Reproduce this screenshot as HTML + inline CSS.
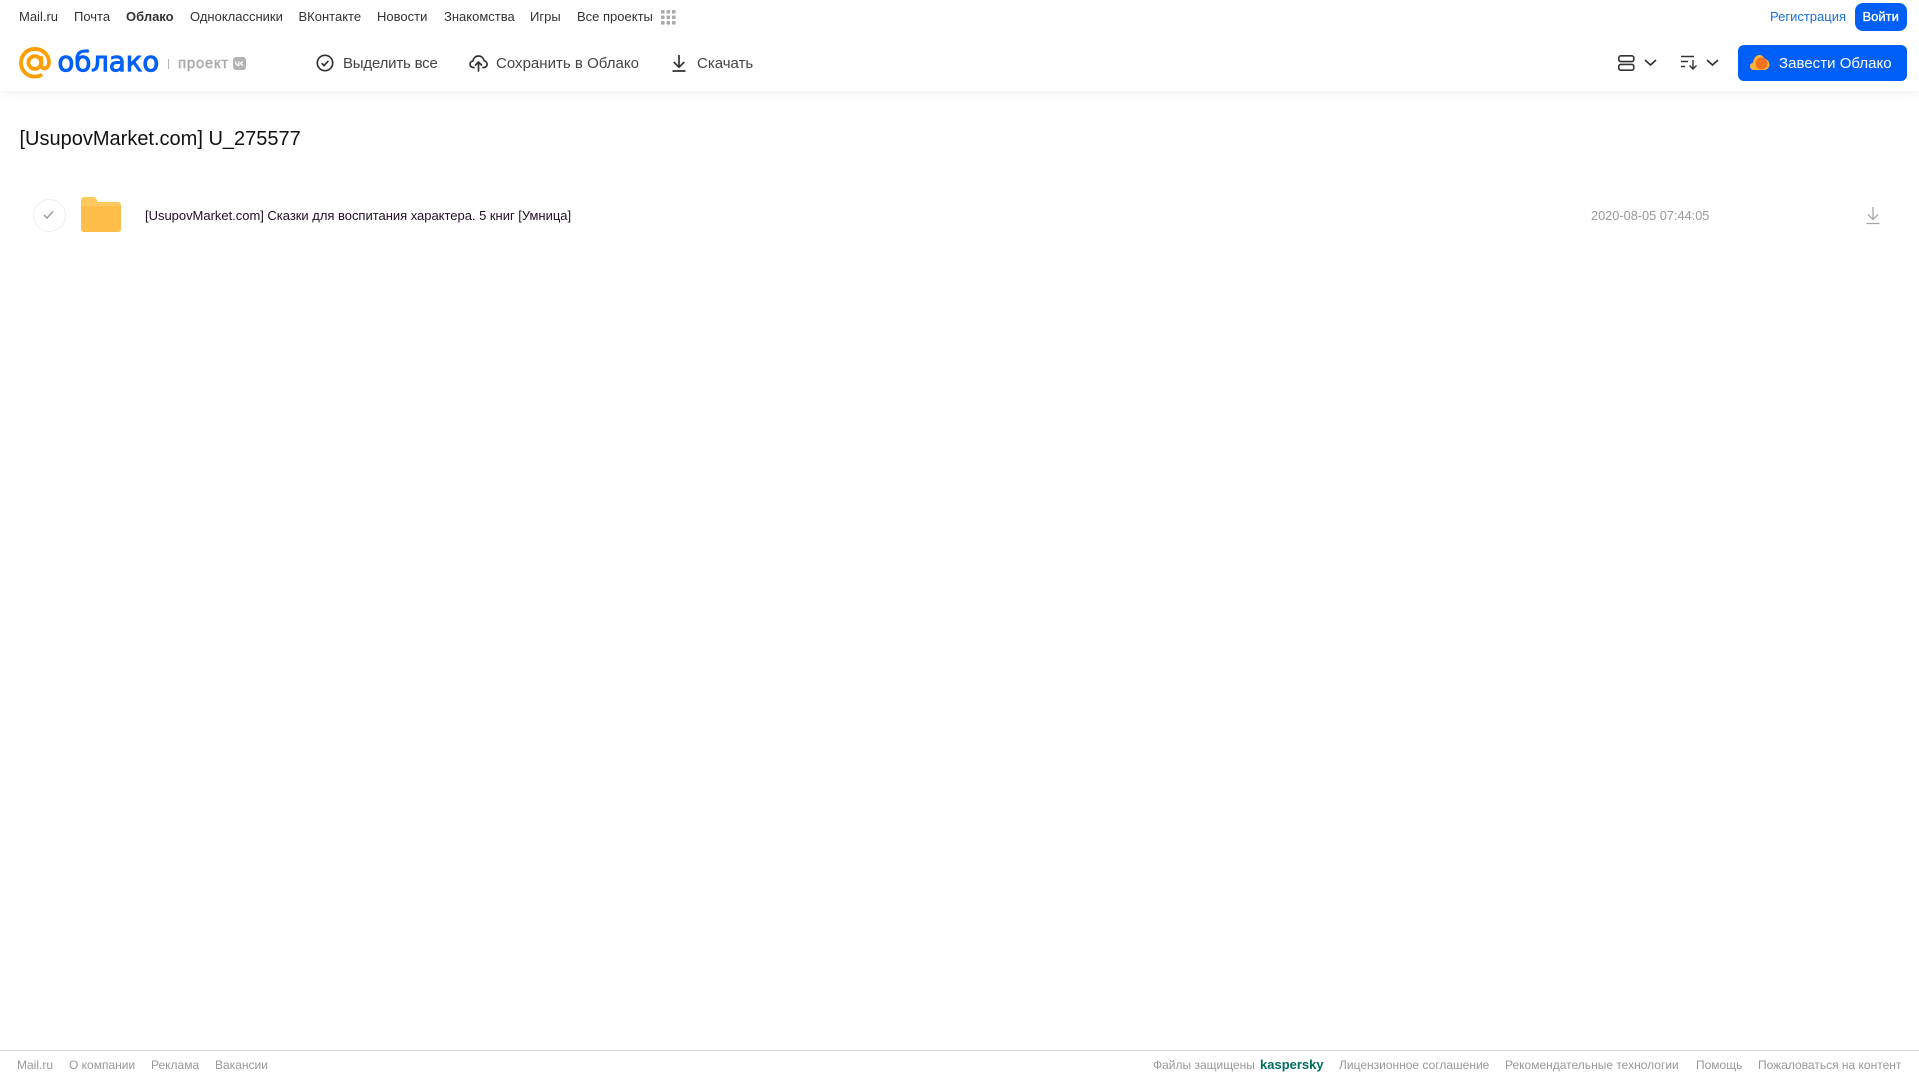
<!DOCTYPE html>
<html lang="ru">
<head>
<meta charset="utf-8">
<title>Облако</title>
<style>
html,body{margin:0;padding:0;background:#fff;}
body{position:relative;width:1919px;height:1079px;overflow:hidden;font-family:"Liberation Sans",Arial,sans-serif;color:#2c2d2e;}
.t{position:absolute;white-space:nowrap;line-height:20px;}
.n{font-size:13px;top:7px;color:#333;}
.a{font-size:15px;top:53.5px;color:#444;}
.f{font-size:12px;top:1055px;color:#999;}
svg{position:absolute;overflow:visible;}
#hdr{position:absolute;left:0;top:0;width:1919px;height:91px;background:#fff;box-shadow:0 1px 12px rgba(0,0,0,.07);}
</style>
</head>
<body>
<div id="hdr"></div>

<span class="t n" style="left:19px">Mail.ru</span>
<span class="t n" style="left:74px">Почта</span>
<span class="t n" style="left:126px;font-weight:bold">Облако</span>
<span class="t n" style="left:190px">Одноклассники</span>
<span class="t n" style="left:298.500px">ВКонтакте</span>
<span class="t n" style="left:377px">Новости</span>
<span class="t n" style="left:444px">Знакомства</span>
<span class="t n" style="left:530px">Игры</span>
<span class="t n" style="left:577px">Все проекты</span>
<svg style="left:661px;top:10px" width="15" height="15" fill="#aaa">
<rect x="0" y="0" width="3.6" height="3.6" rx=".8"/><rect x="5.5" y="0" width="3.6" height="3.6" rx=".8"/><rect x="11" y="0" width="3.6" height="3.6" rx=".8"/>
<rect x="0" y="5.5" width="3.6" height="3.6" rx=".8"/><rect x="5.5" y="5.5" width="3.6" height="3.6" rx=".8"/><rect x="11" y="5.5" width="3.6" height="3.6" rx=".8"/>
<rect x="0" y="11" width="3.6" height="3.6" rx=".8"/><rect x="5.5" y="11" width="3.6" height="3.6" rx=".8"/><rect x="11" y="11" width="3.6" height="3.6" rx=".8"/>
</svg>

<svg style="left:19px;top:47px" width="32" height="32" viewBox="0 0 33 33" fill="none" stroke="#ff9e00" stroke-width="3.9">
<circle cx="16.3" cy="16" r="6.6"/>
<path d="M22.9 9.5v8.6c0 2.6 1.6 4 3.4 4s4.600-1.800 4.600-6.100C30.900 7.800 24.500 2 16.300 2 8.200 2 2 8.400 2 16.300 2 24.300 8.400 30.500 16.300 30.500c2.900 0 5.300-.7 7.500-2.100"/>
</svg>
<span class="t" style="left:57.500px;top:43px;font-family:'DejaVu Sans',sans-serif;font-size:27.500px;line-height:38px;color:#005ff9;-webkit-text-stroke:1px #005ff9">облако</span>
<div style="position:absolute;left:168px;top:59px;width:1px;height:10px;background:#b5b5b5"></div>
<span class="t" style="left:178px;top:53.500px;font-size:15px;color:#a9a9a9;letter-spacing:.7px;-webkit-text-stroke:.45px #a9a9a9">проект</span>
<div style="position:absolute;left:233px;top:57px;width:13px;height:13px;border-radius:3px;background:#b3b3b3"></div>
<svg style="left:233px;top:57px" width="13" height="13" fill="none" stroke="#fff" stroke-width="1.300"><path d="M2.500 4.500c.3 2.500 1.300 4 3.300 4.200V4.500M9.800 4.500 7.500 6.500l2.500 2.300"/></svg>

<svg style="left:316px;top:54px" width="18" height="18" fill="none" stroke="#333" stroke-width="1.700"><circle cx="9" cy="9" r="7.700"/><path d="M5.600 9.200l2.400 2.400 4.400-4.700"/></svg>
<span class="t a" style="left:343px;letter-spacing:-.2px">Выделить все</span>
<svg style="left:469px;top:54px" width="19" height="18" fill="none" stroke="#333" stroke-width="1.700" stroke-linecap="round" stroke-linejoin="round"><path d="M5 13.500H4.300C2.400 13.500 1 12 1 10.300c0-1.700 1.200-3 2.900-3.300C4.400 4 6.700 2 9.500 2c2.900 0 5 2 5.600 4.700 1.700.3 3 1.700 3 3.500 0 1.800-1.400 3.300-3.300 3.300H14"/><path d="M9.500 17V8.500M6.500 11l3-3 3 3"/></svg>
<span class="t a" style="left:496px;letter-spacing:.02px">Сохранить в Облако</span>
<svg style="left:672px;top:55px" width="14" height="17" fill="none" stroke="#333" stroke-width="1.700"><path d="M7 0v12M1.700 7 7 12.200 12.300 7M.5 16h13"/></svg>
<span class="t a" style="left:697px">Скачать</span>

<span class="t n" style="left:1770px;color:#1a6fe0">Регистрация</span>
<div style="position:absolute;left:1855px;top:3px;width:52px;height:28px;border-radius:8px;background:#005ff9"></div>
<span class="t n" style="left:1862.500px;color:#fff;-webkit-text-stroke:.35px #fff">Войти</span>

<svg style="left:1618px;top:55px" width="17" height="16" fill="none" stroke="#333" stroke-width="1.600"><rect x=".8" y=".8" width="15" height="5.800" rx="2"/><rect x=".8" y="9.400" width="15" height="5.800" rx="2"/></svg>
<svg style="left:1644px;top:59px" width="13" height="8" fill="none" stroke="#333" stroke-width="1.700"><path d="M1 1l5.500 5L12 1"/></svg>
<svg style="left:1681px;top:55px" width="17" height="15" fill="none" stroke="#333" stroke-width="1.400"><path d="M0 1.500h13M0 6.500h7M0 11.500h4M12 5v9M8.500 10.500 12 14l3.500-3.500"/></svg>
<svg style="left:1706px;top:59px" width="13" height="8" fill="none" stroke="#333" stroke-width="1.700"><path d="M1 1l5.500 5L12 1"/></svg>
<div style="position:absolute;left:1738px;top:45px;width:169px;height:36px;border-radius:6px;background:#005ff9"></div>
<svg style="left:1750px;top:54px" width="20" height="17">
<path d="M4 16C1.500 16 0 14.200 0 12.200 0 10.300 1.300 9 3 8.600 3.400 4.500 6.200 1 9.300 1c2.200 0 4 1.200 5 3.500 2.800.4 5.200 3.200 5.200 6 0 3-2.300 5.500-5.500 5.500z" fill="#ffb13d"/>
<circle cx="11.500" cy="9.500" r="6" fill="#f5721f"/>
</svg>
<span class="t a" style="left:1779px;color:#fff;letter-spacing:.03px">Завести Облако</span>

<span class="t" style="left:19.500px;top:126px;font-size:20px;line-height:26px;color:#111">[UsupovMarket.com] U_275577</span>

<div style="position:absolute;left:33px;top:199px;width:31px;height:31px;border:1px solid #eee;border-radius:50%"></div>
<svg style="left:43px;top:210px" width="12" height="10" fill="none" stroke="#999" stroke-width="1.300"><path d="M1 5l3 3 6-6.500"/></svg>
<svg style="left:81px;top:197px" width="40" height="35" viewBox="0 0 40 35">
<path d="M0 3a3 3 0 0 1 3-3h9c2 0 3 1 4 3l1 2h20a3 3 0 0 1 3 3v24a3 3 0 0 1-3 3H3a3 3 0 0 1-3-3z" fill="#ffc95f"/>
<path d="M0 9h40v23a3 3 0 0 1-3 3H3a3 3 0 0 1-3-3z" fill="#ffbe4a"/>
</svg>
<span class="t" style="left:145px;top:206px;font-size:13px;color:#1f1022;letter-spacing:-.02px">[UsupovMarket.com] Сказки для воспитания характера. 5 книг [Умница]</span>
<span class="t" style="left:1591px;top:206px;font-size:12.750px;color:#999">2020-08-05 07:44:05</span>
<svg style="left:1866px;top:207px" width="14" height="18" fill="none" stroke="#a5a5a5" stroke-width="1.300"><path d="M7 0v12M2 7.500 7 12.500l5-5M.5 16.500h13"/></svg>

<div style="position:absolute;left:0;top:1050px;width:1919px;height:1px;background:#d9d9d9"></div>
<span class="t f" style="left:17px">Mail.ru</span>
<span class="t f" style="left:69px">О компании</span>
<span class="t f" style="left:151px">Реклама</span>
<span class="t f" style="left:215px">Вакансии</span>
<span class="t f" style="left:1153px">Файлы защищены</span>
<span class="t f" style="left:1260px;color:#006d5c;font-weight:bold;font-size:13px">kaspersky</span>
<span class="t f" style="left:1339px">Лицензионное соглашение</span>
<span class="t f" style="left:1505px">Рекомендательные технологии</span>
<span class="t f" style="left:1696px">Помощь</span>
<span class="t f" style="left:1758px">Пожаловаться на контент</span>
</body>
</html>
